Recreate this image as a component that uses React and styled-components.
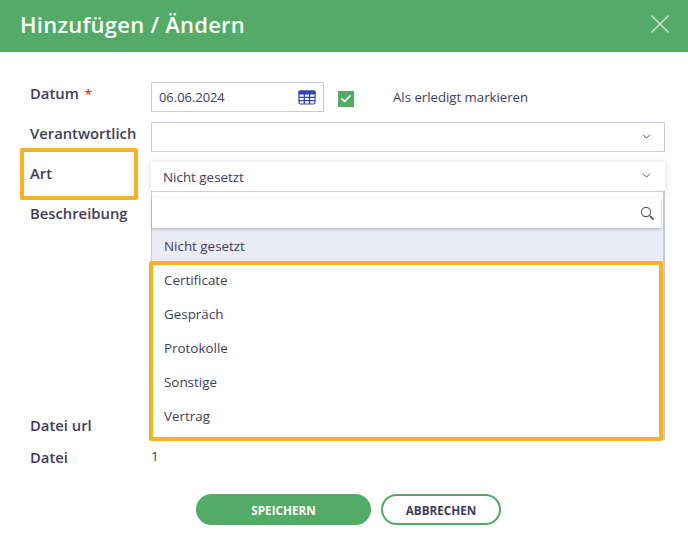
import React from 'react';
import styled, { createGlobalStyle } from 'styled-components';
import { ChevronDown, Check, X } from 'lucide-react';

const p = {
    green: '#53ab67',
    ink: '#3f3d5a',
    border: '#c5cbe6',
    orange: '#f7b122',
    selected: '#ebebf5',
};

const GlobalStyle = createGlobalStyle`
    html, body {
        margin: 0;
        padding: 0;
        background: #fff;
        color: ${p.ink};
        font-family: 'Open Sans', 'Noto Sans', sans-serif;
    }
`;

const Dialog = styled.div`
    position: relative;
    width: 688px;
    height: 548px;
    overflow: hidden;
`;

const Header = styled.header`
    height: 52px;
    padding: 0 20px;
    background: ${p.green};
    color: #fff;
    display: flex;
    justify-content: space-between;
    align-items: center;
    box-sizing: border-box;

    & h1 {
        margin: -4px 0 0;
        font-size: 22px;
        font-weight: 600;
        letter-spacing: 0.25px;
    }

    & svg {
        color: #c3e2ca;
        margin: -4px -8px 0 0;
    }
`;

const Form = styled.form`
    padding: 30px 23px 0 30px;
    display: flex;
    flex-direction: column;
    gap: 10px;
`;

const Row = styled.div`
    display: flex;
    align-items: ${props => (props.$top ? 'flex-start' : 'center')};
    height: ${props => props.$height || 30}px;
`;

const Label = styled.label`
    width: 121px;
    flex: none;
    font-size: 14.8px;
    font-weight: 600;
    line-height: 22px;
    margin-top: ${props => (props.$top ? 0 : -8)}px;

    & em {
        color: #e0372c;
        font-size: 13px;
        font-style: normal;
        margin-left: 6px;
    }
`;

const Field = styled.div`
    box-sizing: border-box;
    height: 30px;
    width: ${props => props.$width || '100%'};
    padding: 0 ${props => props.$pad || 11}px;
    border: 1px solid ${p.border};
    background: #fff;
    font-size: 13.4px;
    display: flex;
    justify-content: space-between;
    align-items: center;

    & > svg {
        color: ${p.ink};
        margin-top: -2px;
    }
`;

const DateText = styled.span`
    font-size: 12.9px;
`;

const DateIcon = styled.svg`
    && {
        margin-top: 0;
    }
`;

const Toggle = styled.span`
    width: 16px;
    height: 16px;
    margin: 4px 0 0 14px;
    background: ${p.green};
    color: #fff;
    display: flex;
    justify-content: center;
    align-items: center;
`;

const ToggleText = styled.span`
    margin-left: 39px;
    font-size: 13.2px;
`;

const Value = styled.span`
    font-size: 13.4px;
    margin-top: -11px;
`;

const Open = styled(Field)`
    position: absolute;
    top: 162px;
    left: 151px;
    width: 514px;
    padding: 0 12px;
    border-width: 0 0 1px;
    box-shadow: 0 0 8px rgba(60, 60, 90, 0.18);
`;

const Menu = styled.div`
    position: absolute;
    top: 192px;
    left: 151px;
    width: 514px;
    height: 248px;
    box-sizing: border-box;
    border: 1px solid ${p.border};
    border-top: 0;
    border-right-width: 2px;
    background: #fff;
`;

const Search = styled.div`
    height: 30px;
    margin: 6px 2px 0 0;
    padding-right: 6px;
    display: flex;
    justify-content: flex-end;
    align-items: center;
    box-shadow: 0 1px 3px rgba(60, 60, 60, 0.35);
    position: relative;
`;

const Option = styled.div`
    box-sizing: border-box;
    height: 34px;
    padding: 2px 0 0 12px;
    font-size: 13.4px;
    display: flex;
    align-items: center;
    background: ${props => (props.$selected ? p.selected : '#fff')};
`;

const Mark = styled.div`
    position: absolute;
    box-sizing: border-box;
    border: 4px solid ${p.orange};
    border-radius: 2px;
    left: ${props => props.$x}px;
    top: ${props => props.$y}px;
    width: ${props => props.$w}px;
    height: ${props => props.$h}px;
`;

const Footer = styled.div`
    margin-top: 12px;
    padding-left: 2px;
    display: flex;
    justify-content: center;
    gap: 10px;
`;

const Button = styled.button`
    box-sizing: border-box;
    height: 31px;
    width: ${props => props.$width}px;
    border-radius: 16px;
    border: 2px solid ${p.green};
    background: ${props => (props.$primary ? p.green : '#fff')};
    color: ${props => (props.$primary ? '#fff' : p.ink)};
    font-family: inherit;
    font-size: 11.7px;
    font-weight: 700;
    padding: 0;
`;

const CalendarIcon = () => (
    <DateIcon width="18" height="15" viewBox="0 0 18 15" fill="none" stroke="#2a44b0" strokeWidth="1.2">
        <rect x="1" y="1" width="16" height="13" rx="1.5" />
        <rect x="1" y="1" width="16" height="3" rx="1" fill="#2a44b0" />
        <path d="M1 7.3h16M1 10.6h16M6.3 4v10M11.6 4v10" />
    </DateIcon>
);

const SearchIcon = () => (
    <svg width="15" height="15" viewBox="0 0 15 15" fill="none" stroke="#55556f">
        <circle cx="6" cy="6" r="4.6" strokeWidth="1.1" />
        <path d="M9.5 9.5l1.5 1.5" strokeWidth="1.1" />
        <path d="M10.6 10.6l3 3" strokeWidth="2" />
    </svg>
);

const options = ['Certificate', 'Gespräch', 'Protokolle', 'Sonstige', 'Vertrag'];

const App = () => {
    return (
        <Dialog>
            <GlobalStyle />
            <Header>
                <h1>Hinzufügen / Ändern</h1>
                <X size={32} strokeWidth={1.2} />
            </Header>
            <Form>
                <Row>
                    <Label>
                        Datum<em>*</em>
                    </Label>
                    <Field $width="173px" $pad={7}>
                        <DateText>06.06.2024</DateText>
                        <CalendarIcon />
                    </Field>
                    <Toggle>
                        <Check size={12} strokeWidth={3.5} />
                    </Toggle>
                    <ToggleText>Als erledigt markieren</ToggleText>
                </Row>
                <Row>
                    <Label>Verantwortlich</Label>
                    <Field>
                        <span />
                        <ChevronDown size={13} strokeWidth={1.7} />
                    </Field>
                </Row>
                <Row>
                    <Label>Art</Label>
                </Row>
                <Row $top $height={206}>
                    <Label $top>Beschreibung</Label>
                </Row>
                <Row $height={22}>
                    <Label>Datei url</Label>
                </Row>
                <Row $height={22}>
                    <Label>Datei</Label>
                    <Value>1</Value>
                </Row>
                <Footer>
                    <Button type="button" $primary $width={175}>
                        SPEICHERN
                    </Button>
                    <Button type="button" $width={120}>
                        ABBRECHEN
                    </Button>
                </Footer>
            </Form>
            <Open>
                Nicht gesetzt
                <ChevronDown size={13} strokeWidth={1.7} />
            </Open>
            <Menu>
                <Search>
                    <SearchIcon />
                </Search>
                <Option $selected>Nicht gesetzt</Option>
                {options.map(o => (
                    <Option key={o}>{o}</Option>
                ))}
            </Menu>
            <Mark $x={20} $y={148} $w={118} $h={52} />
            <Mark $x={149} $y={261} $w={514} $h={180} />
        </Dialog>
    );
};

export default App;
